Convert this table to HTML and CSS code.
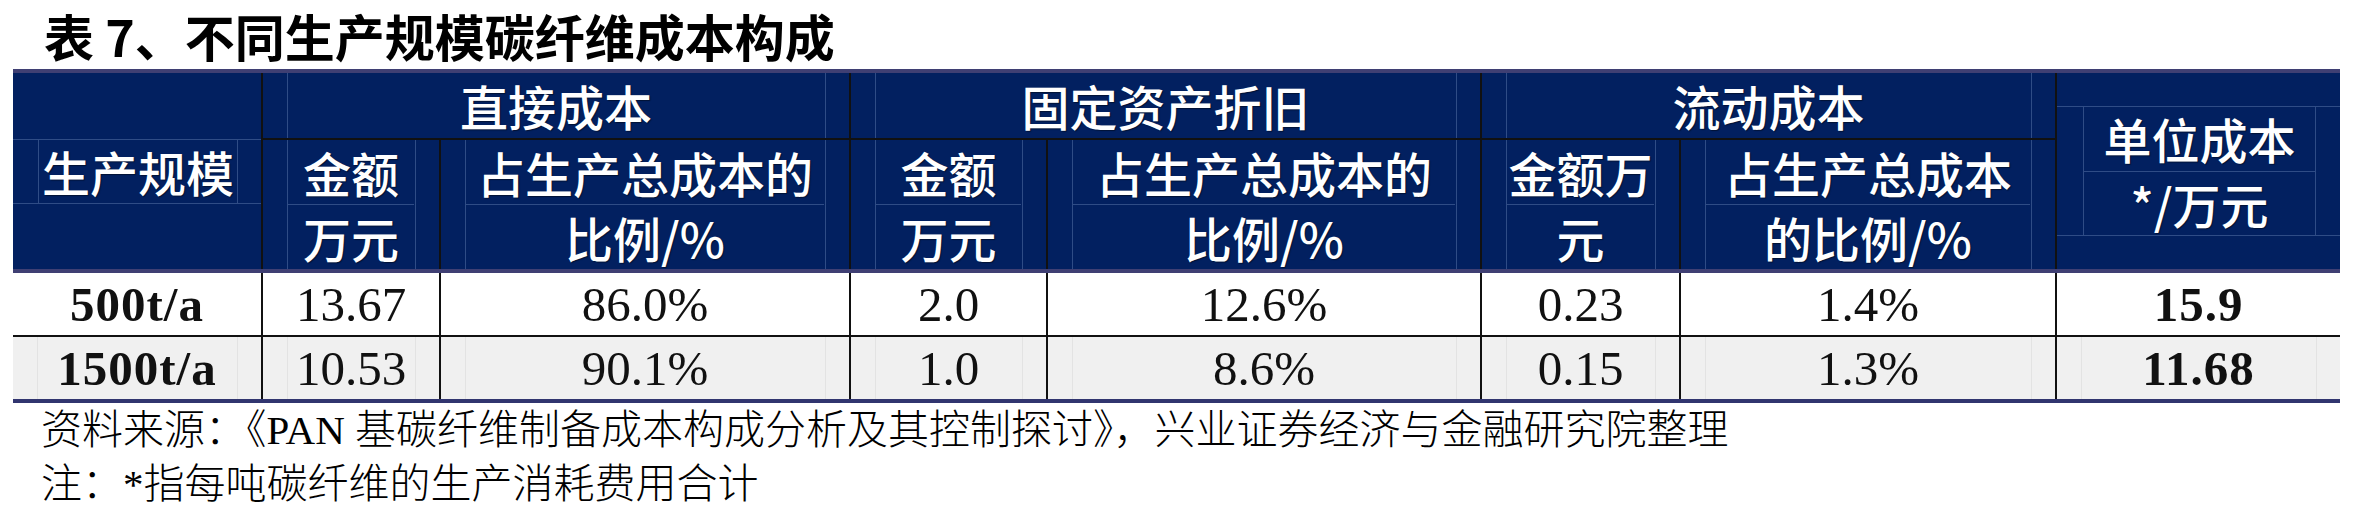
FILE: index.html
```html
<!DOCTYPE html>
<html lang="zh-CN">
<head>
<meta charset="utf-8">
<title>表 7、不同生产规模碳纤维成本构成</title>
<link rel="stylesheet" href="styles.css">
</head>
<body>
<div class="page">
  <h1 class="title">表 7、不同生产规模碳纤维成本构成</h1>
  <div class="cost-table">
    <div class="thead">
      <div class="th th-scale">
        <div class="box"><div class="box-in"><div class="ln">生产规模</div></div></div>
      </div>
      <div class="th th-group g1">直接成本</div>
      <div class="th th-group g2">固定资产折旧</div>
      <div class="th th-group g3">流动成本</div>
      <div class="th th-unit">
        <div class="box"><div class="box-in unit-in"><div class="ln sep">单位成本</div><div class="ln">*/万元</div></div></div>
      </div>
      <div class="th th-sub"><div class="ln sep">金额</div><div class="ln">万元</div></div>
      <div class="th th-sub"><div class="ln sep">占生产总成本的</div><div class="ln">比例/%</div></div>
      <div class="th th-sub"><div class="ln sep">金额</div><div class="ln">万元</div></div>
      <div class="th th-sub"><div class="ln sep">占生产总成本的</div><div class="ln">比例/%</div></div>
      <div class="th th-sub"><div class="ln sep">金额万</div><div class="ln">元</div></div>
      <div class="th th-sub"><div class="ln sep">占生产总成本</div><div class="ln">的比例/%</div></div>
    </div>
    <div class="tbody">
      <div class="td r1 strong">500t/a</div>
      <div class="td r1">13.67</div>
      <div class="td r1">86.0%</div>
      <div class="td r1">2.0</div>
      <div class="td r1">12.6%</div>
      <div class="td r1">0.23</div>
      <div class="td r1">1.4%</div>
      <div class="td r1 strong last">15.9</div>
      <div class="td r2 strong">1500t/a</div>
      <div class="td r2">10.53</div>
      <div class="td r2">90.1%</div>
      <div class="td r2">1.0</div>
      <div class="td r2">8.6%</div>
      <div class="td r2">0.15</div>
      <div class="td r2">1.3%</div>
      <div class="td r2 strong last">11.68</div>
    </div>
  </div>
  <div class="notes">
    <p>资料来源：《PAN 基碳纤维制备成本构成分析及其控制探讨》，兴业证券经济与金融研究院整理</p>
    <p>注：*指每吨碳纤维的生产消耗费用合计</p>
  </div>
</div>
</body>
</html>
```

FILE: styles.css
```css
html, body {
  margin: 0;
  padding: 0;
  background: #ffffff;
}

.page {
  padding: 10px 0 0 13px;
  width: 2327px;
}

.title {
  margin: 0 0 9px 31px;
  font: 700 50px/50px "Noto Sans CJK SC", sans-serif;
  color: #000;
  white-space: nowrap;
}

.thead,
.tbody {
  display: grid;
  grid-template-columns: 250px 178px 410px 197px 434px 199px 376px 283px;
}

.thead {
  grid-template-rows: 67px 129px;
  background: #022060;
  border-top: 4px solid #3f3f73;
  border-bottom: 4px solid #3f3f73;
  color: #ffffff;
  font: 500 48px "Noto Sans CJK SC", sans-serif;
  text-shadow: 1px 1px 1px rgba(0, 0, 0, 0.45);
}

.th {
  box-sizing: border-box;
  text-align: center;
  white-space: nowrap;
}

.th-scale {
  grid-column: 1;
  grid-row: 1 / 3;
  border-right: 2px solid #111;
  display: flex;
  align-items: center;
}

.th-unit {
  grid-column: 8;
  grid-row: 1 / 3;
  display: flex;
  align-items: center;
}

.box {
  width: 100%;
  border-top: 1px solid #2f4c86;
  border-bottom: 1px solid #2f4c86;
}

.box-in {
  margin: 0 23px 0 25px;
  border-left: 1px solid #2f4c86;
  border-right: 1px solid #2f4c86;
}

.unit-in {
  margin: 0 24px 0 26px;
}

.box .ln {
  height: 63px;
  line-height: 63px;
}

.box .ln.sep {
  height: 64px;
}

.th-group,
.th-sub {
  border-right: 2px solid #111;
  padding: 0 25px;
  background-image:
    linear-gradient(#2f4c86, #2f4c86),
    linear-gradient(#2f4c86, #2f4c86);
  background-size: 1px 100%, 1px 100%;
  background-repeat: no-repeat;
  background-position: left 24px top 0, right 23px top 0;
}

.th-group {
  grid-row: 1;
  border-bottom: 2px solid #111;
  line-height: 65px;
}

.g1 { grid-column: 2 / 4; }
.g2 { grid-column: 4 / 6; }
.g3 { grid-column: 6 / 8; }

.th-sub .ln {
  box-sizing: border-box;
  height: 64px;
  line-height: 64px;
}

.ln.sep {
  border-bottom: 1px solid #2f4c86;
}

.th-sub .ln.sep {
  height: 65px;
}

.tbody {
  grid-template-rows: 64px 62px;
  border-bottom: 4px solid #31356f;
  font: 400 49px "Liberation Serif", serif;
  color: #111;
}

.td {
  box-sizing: border-box;
  display: flex;
  align-items: center;
  justify-content: center;
  border-right: 2px solid #111;
  white-space: nowrap;
}

.td.last {
  border-right: none;
}

.td.r1 {
  border-bottom: 2px solid #111;
  background: #ffffff;
}

.td.r2 {
  background-color: #f0f0f0;
  background-image:
    linear-gradient(#e3e3e3, #e3e3e3),
    linear-gradient(#e3e3e3, #e3e3e3);
  background-size: 1px 100%, 1px 100%;
  background-repeat: no-repeat;
  background-position: left 24px top 0, right 23px top 0;
}

.td.strong {
  font-weight: 700;
  letter-spacing: 1px;
}

.notes {
  padding-left: 28px;
  font: 300 41px/54px "Liberation Serif", "Noto Sans CJK SC", serif;
  color: #000;
}

.notes p {
  margin: 0;
  white-space: nowrap;
}
```
